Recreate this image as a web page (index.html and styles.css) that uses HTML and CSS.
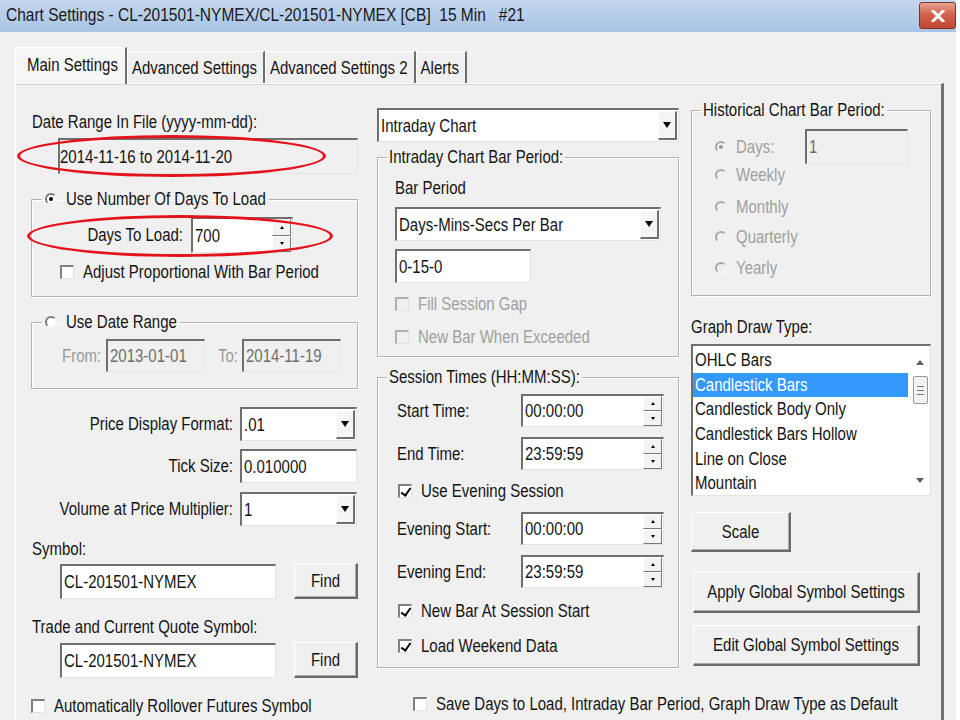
FILE: index.html
```html
<!DOCTYPE html>
<html lang="en">

<head>
    <meta charset="UTF-8">
    <meta name="viewport" content="width=device-width, initial-scale=1.0">
    <title>Chart Settings</title>
    <link rel="stylesheet" href="styles.css">
</head>

<body>
    <div class="window">
        <div class="titleBar">
            <span class="title"><span class="txt">Chart Settings - CL-201501-NYMEX/CL-201501-NYMEX [CB]&nbsp; 15 Min &nbsp; #21</span></span>
            <div class="close">
                <svg width="14" height="12" viewBox="0 0 14 12">
                    <path d="M2 1 L12 11 M12 1 L2 11" stroke="#fff" stroke-width="3" stroke-linecap="square" />
                </svg>
            </div>
        </div>

        <div class="tabs">
            <div class="tab active"><span class="txt">Main Settings</span></div>
            <div class="tab"><span class="txt">Advanced Settings</span></div>
            <div class="tab"><span class="txt">Advanced Settings 2</span></div>
            <div class="tab"><span class="txt">Alerts</span></div>
        </div>

        <div class="panel">
            <!-- left column -->
            <div class="col leftCol">
                <div class="caption rangeCaption"><span class="txt">Date Range In File (yyyy-mm-dd):</span></div>
                <div class="field readonly dateRange"><span class="txt">2014-11-16 to 2014-11-20</span></div>

                <fieldset class="group daysGroup">
                    <legend><span class="radio on"></span><span class="txt">Use Number Of Days To Load</span></legend>
                    <div class="row daysRow">
                        <span class="rowLabel daysLabel"><span class="txt">Days To Load:</span></span>
                        <div class="field spin daysSpin">
                            <span class="txt">700</span>
                            <span class="spinBtns"><i class="up"></i><i class="down"></i></span>
                        </div>
                    </div>
                    <div class="check adjust"><span class="box"></span><span class="txt">Adjust Proportional With Bar Period</span></div>
                </fieldset>

                <fieldset class="group rangeGroup">
                    <legend><span class="radio"></span><span class="txt">Use Date Range</span></legend>
                    <div class="row rangeRow">
                        <span class="muted fromLabel"><span class="txt">From:</span></span>
                        <div class="field disabled rangeField"><span class="txt">2013-01-01</span></div>
                        <span class="muted toLabel"><span class="txt">To:</span></span>
                        <div class="field disabled rangeField"><span class="txt">2014-11-19</span></div>
                    </div>
                </fieldset>

                <div class="row formatRow">
                    <span class="rowLabel priceLabel"><span class="txt">Price Display Format:</span></span>
                    <div class="field combo priceField"><span class="txt">.01</span><span class="drop"></span></div>
                </div>
                <div class="row tickRow">
                    <span class="rowLabel priceLabel"><span class="txt">Tick Size:</span></span>
                    <div class="field priceField"><span class="txt">0.010000</span></div>
                </div>
                <div class="row volumeRow">
                    <span class="rowLabel priceLabel"><span class="txt">Volume at Price Multiplier:</span></span>
                    <div class="field combo priceField"><span class="txt">1</span><span class="drop"></span></div>
                </div>

                <div class="caption symbolCaption"><span class="txt">Symbol:</span></div>
                <div class="row symbolRow">
                    <div class="field symbolField"><span class="txt">CL-201501-NYMEX</span></div>
                    <div class="btn findBtn"><span class="txt">Find</span></div>
                </div>
                <div class="caption quoteCaption"><span class="txt">Trade and Current Quote Symbol:</span></div>
                <div class="row quoteRow">
                    <div class="field symbolField"><span class="txt">CL-201501-NYMEX</span></div>
                    <div class="btn findBtn"><span class="txt">Find</span></div>
                </div>
                <div class="check rollover"><span class="box"></span><span class="txt">Automatically Rollover Futures Symbol</span></div>
            </div>

            <!-- middle column -->
            <div class="col midCol">
                <div class="field combo chartType"><span class="txt">Intraday Chart</span><span class="drop"></span></div>

                <fieldset class="group barGroup">
                    <legend><span class="txt">Intraday Chart Bar Period:</span></legend>
                    <div class="caption barCaption"><span class="txt">Bar Period</span></div>
                    <div class="field combo barCombo"><span class="txt">Days-Mins-Secs Per Bar</span><span class="drop"></span></div>
                    <div class="field barValue"><span class="txt">0-15-0</span></div>
                    <div class="check off fillGap"><span class="box"></span><span class="txt">Fill Session Gap</span></div>
                    <div class="check off exceeded"><span class="box"></span><span class="txt">New Bar When Exceeded</span></div>
                </fieldset>

                <fieldset class="group sessionGroup">
                    <legend><span class="txt">Session Times (HH:MM:SS):</span></legend>
                    <div class="row timeRow firstTime">
                        <span class="timeLabel"><span class="txt">Start Time:</span></span>
                        <div class="field spin timeSpin"><span class="txt">00:00:00</span><span class="spinBtns"><i class="up"></i><i class="down"></i></span></div>
                    </div>
                    <div class="row timeRow">
                        <span class="timeLabel"><span class="txt">End Time:</span></span>
                        <div class="field spin timeSpin"><span class="txt">23:59:59</span><span class="spinBtns"><i class="up"></i><i class="down"></i></span></div>
                    </div>
                    <div class="check evening"><span class="box ticked"></span><span class="txt">Use Evening Session</span></div>
                    <div class="row timeRow">
                        <span class="timeLabel"><span class="txt">Evening Start:</span></span>
                        <div class="field spin timeSpin"><span class="txt">00:00:00</span><span class="spinBtns"><i class="up"></i><i class="down"></i></span></div>
                    </div>
                    <div class="row timeRow">
                        <span class="timeLabel"><span class="txt">Evening End:</span></span>
                        <div class="field spin timeSpin"><span class="txt">23:59:59</span><span class="spinBtns"><i class="up"></i><i class="down"></i></span></div>
                    </div>
                    <div class="check newBar"><span class="box ticked"></span><span class="txt">New Bar At Session Start</span></div>
                    <div class="check weekend"><span class="box ticked"></span><span class="txt">Load Weekend Data</span></div>
                </fieldset>

                <div class="check saveDefault"><span class="box"></span><span class="txt">Save Days to Load, Intraday Bar Period, Graph Draw Type as Default</span></div>
            </div>

            <!-- right column -->
            <div class="col rightCol">
                <fieldset class="group histGroup">
                    <legend><span class="txt">Historical Chart Bar Period:</span></legend>
                    <div class="row histDays">
                        <div class="option"><span class="radio on off"></span><span class="txt">Days:</span></div>
                        <div class="field disabled histField"><span class="txt">1</span></div>
                    </div>
                    <div class="option weekly"><span class="radio off"></span><span class="txt">Weekly</span></div>
                    <div class="option monthly"><span class="radio off"></span><span class="txt">Monthly</span></div>
                    <div class="option quarterly"><span class="radio off"></span><span class="txt">Quarterly</span></div>
                    <div class="option yearly"><span class="radio off"></span><span class="txt">Yearly</span></div>
                </fieldset>

                <div class="caption drawCaption"><span class="txt">Graph Draw Type:</span></div>
                <div class="listBox">
                    <div class="items">
                        <div class="item"><span class="txt">OHLC Bars</span></div>
                        <div class="item selected"><span class="txt">Candlestick Bars</span></div>
                        <div class="item"><span class="txt">Candlestick Body Only</span></div>
                        <div class="item"><span class="txt">Candlestick Bars Hollow</span></div>
                        <div class="item"><span class="txt">Line on Close</span></div>
                        <div class="item"><span class="txt">Mountain</span></div>
                    </div>
                    <div class="scrollBar">
                        <span class="arrowUp"></span>
                        <span class="thumb"><i></i><i></i><i></i></span>
                        <span class="arrowDown"></span>
                    </div>
                </div>

                <div class="btn scaleBtn"><span class="txt">Scale</span></div>
                <div class="btn wideBtn applyBtn"><span class="txt">Apply Global Symbol Settings</span></div>
                <div class="btn wideBtn editBtn"><span class="txt">Edit Global Symbol Settings</span></div>
            </div>
        </div>

        <div class="mark markRange"></div>
        <div class="mark markDays"></div>
    </div>
</body>

</html>
```

FILE: styles.css
```css
* {
    margin: 0px;
    padding: 0px;
    box-sizing: border-box;
}

body {
    background-color: #ffffff;
    font-family: "Liberation Sans", Arial, sans-serif;
    font-size: 15px;
    color: #141414;
}

/* the old dialog font is tall and narrow: stretch the glyphs upward */
.txt {
    display: inline-block;
    line-height: 18px;
    white-space: nowrap;
    transform: scaleY(1.22);
}

.window {
    position: relative;
    width: 956px;
    height: 720px;
    overflow: hidden;
    background-color: #f0f0f0;
}

/* title bar */

.titleBar {
    display: flex;
    justify-content: space-between;
    align-items: flex-start;
    height: 32px;
    background: linear-gradient(#c3d7ee, #a8c4e5);
}

.title {
    padding-left: 6px;
    line-height: 30px;
    font-size: 15.5px;
    color: #1a1a1a;
}

.close {
    display: flex;
    align-items: center;
    justify-content: center;
    width: 37px;
    height: 27px;
    margin-top: 2px;
    border: 1px solid #7a3328;
    border-radius: 3px;
    background: linear-gradient(#e9a393, #d0644f 45%, #c24631);
}

/* tabs */

.tabs {
    position: relative;
    z-index: 1;
    display: flex;
    align-items: flex-end;
    height: 36px;
    margin: 15px 0 0 15px;
}

.tab {
    display: flex;
    align-items: center;
    height: 32px;
    padding: 0 6px 0 4px;
    border-top: 1px solid #ffffff;
    border-left: 1px solid #ffffff;
    border-right: 2px solid #6e6e6e;
    background-color: #f0f0f0;
}

.tab.active {
    height: 37px;
    margin-bottom: -1px;
    padding: 0 7px 2px 11px;
    background-color: #f6f6f6;
}

.panel {
    display: flex;
    width: 929px;
    height: 640px;
    margin-left: 15px;
    padding-left: 15px;
    border-top: 1px solid #fdfdfd;
    border-left: 1px solid #fdfdfd;
    border-right: 3px solid #707070;
    box-shadow: inset 0 1px 0 #d6d6d6;
}

.col {
    display: flex;
    flex-direction: column;
    align-items: flex-start;
}

.leftCol {
    width: 327px;
}

.midCol {
    width: 302px;
    margin-left: 19px;
}

.rightCol {
    width: 240px;
    margin-left: 12px;
}

.caption {
    display: flex;
    align-items: center;
    height: 20px;
}

.row {
    display: flex;
    align-items: center;
}

.muted {
    color: #9a9a9a;
}

/* group boxes */

.group {
    width: 100%;
    border: 1px solid #b4b4b4;
    box-shadow: inset 1px 1px 0 #ffffff, 1px 1px 0 #ffffff;
    padding: 0;
}

.group legend {
    display: flex;
    align-items: center;
    gap: 9px;
    height: 20px;
    margin-left: 10px;
    padding: 0 3px;
}

/* edit fields */

.field {
    display: flex;
    align-items: center;
    height: 34px;
    padding-left: 2px;
    background-color: #ffffff;
    border-top: 2px solid #6f6f6f;
    border-left: 2px solid #6f6f6f;
    border-right: 1px solid #e4e4e4;
    border-bottom: 1px solid #e4e4e4;
}

.field.readonly,
.field.disabled {
    background-color: #f0f0f0;
}

.field.disabled {
    color: #6e6e6e;
}

.combo,
.spin {
    justify-content: space-between;
    padding-right: 1px;
}

.drop {
    display: flex;
    align-items: center;
    justify-content: center;
    align-self: stretch;
    width: 19px;
    margin: 1px 0;
    background-color: #f5f5f5;
    border-top: 1px solid #ffffff;
    border-left: 1px solid #ffffff;
    border-right: 2px solid #6e6e6e;
    border-bottom: 2px solid #6e6e6e;
}

.drop::after {
    content: "";
    border-left: 4px solid transparent;
    border-right: 4px solid transparent;
    border-top: 6px solid #000000;
}

.spinBtns {
    display: flex;
    flex-direction: column;
    align-self: stretch;
    width: 19px;
}

.spinBtns i {
    flex: 1;
    display: flex;
    align-items: center;
    justify-content: center;
    background-color: #f3f3f3;
    border-top: 1px solid #ffffff;
    border-left: 1px solid #ffffff;
    border-right: 1px solid #777777;
    border-bottom: 1px solid #777777;
}

.spinBtns .up::after {
    content: "";
    border-left: 2px solid transparent;
    border-right: 2px solid transparent;
    border-bottom: 3px solid #000000;
}

.spinBtns .down::after {
    content: "";
    border-left: 2px solid transparent;
    border-right: 2px solid transparent;
    border-top: 3px solid #000000;
}

/* check boxes and radios */

.check,
.option {
    display: flex;
    align-items: center;
    gap: 9px;
    height: 20px;
}

.box {
    position: relative;
    width: 14px;
    height: 14px;
    background-color: #ffffff;
    border-top: 2px solid #808080;
    border-left: 2px solid #808080;
    border-right: 1px solid #e2e2e2;
    border-bottom: 1px solid #e2e2e2;
}

.box.ticked::after {
    content: "";
    position: absolute;
    left: 3px;
    top: 0px;
    width: 4px;
    height: 8px;
    border-right: 2px solid #000000;
    border-bottom: 2px solid #000000;
    transform: rotate(35deg);
}

.check.off {
    color: #a0a0a0;
}

.check.off .box {
    background-color: #f0f0f0;
    border-top-color: #b0b0b0;
    border-left-color: #b0b0b0;
}

.radio {
    position: relative;
    width: 12px;
    height: 12px;
    border-radius: 50%;
    background-color: #ffffff;
    border: 2px solid;
    border-color: #7a7a7a #f4f4f4 #f4f4f4 #7a7a7a;
}

.radio.on::after {
    content: "";
    position: absolute;
    left: 2px;
    top: 2px;
    width: 4px;
    height: 4px;
    border-radius: 50%;
    background-color: #000000;
}

.radio.off {
    background-color: #f0f0f0;
    border-color: #a8a8a8 #f4f4f4 #f4f4f4 #a8a8a8;
}

.radio.off::after {
    background-color: #9a9a9a;
}

/* buttons */

.btn {
    display: flex;
    align-items: center;
    justify-content: center;
    background-color: #f0f0f0;
    border-top: 1px solid #ffffff;
    border-left: 1px solid #ffffff;
    border-right: 2px solid #6a6a6a;
    border-bottom: 2px solid #6a6a6a;
    box-shadow: inset -1px -1px 0 #a8a8a8;
}

/* left column */

.rangeCaption {
    margin-top: 28px;
    margin-left: 1px;
}

.dateRange {
    width: 300px;
    height: 36px;
    margin-top: 6px;
    margin-left: 27px;
    padding-left: 0;
}

.daysGroup {
    margin-top: 15px;
    padding-bottom: 14px;
}

.daysRow {
    margin-top: 8px;
}

.daysLabel {
    width: 151px;
    margin-right: 8px;
    text-align: right;
}

.daysSpin {
    width: 102px;
    height: 36px;
}

.adjust {
    margin-top: 9px;
    margin-left: 28px;
}

.rangeGroup {
    margin-top: 15px;
    padding-bottom: 16px;
}

.rangeRow {
    margin-top: 7px;
}

.fromLabel {
    width: 44px;
    margin-left: 30px;
}

.toLabel {
    width: 24px;
    margin-left: 13px;
}

.rangeField {
    width: 99px;
    height: 33px;
}

.rowLabel {
    text-align: right;
}

.priceLabel {
    width: 202px;
    margin-right: 7px;
}

.priceField {
    width: 117px;
}

.formatRow {
    margin-top: 18px;
}

.tickRow {
    margin-top: 8px;
}

.volumeRow {
    margin-top: 9px;
}

.symbolCaption {
    margin-top: 13px;
    margin-left: 1px;
}

.symbolRow {
    margin-top: 4px;
    margin-left: 29px;
}

.symbolField {
    width: 216px;
    height: 35px;
}

.findBtn {
    width: 64px;
    height: 36px;
    margin-left: 18px;
}

.quoteCaption {
    margin-top: 18px;
    margin-left: 1px;
}

.quoteRow {
    margin-top: 5px;
    margin-left: 29px;
}

.rollover {
    margin-top: 18px;
}

/* middle column */

.chartType {
    width: 302px;
    margin-top: 24px;
}

.barGroup {
    margin-top: 5px;
    padding: 0 0 9px 17px;
}

/* legends sit after the group's left padding, pull them back to the frame corner */
.barGroup legend {
    margin-left: -8px;
    padding: 0 2px;
}

.sessionGroup legend {
    margin-left: -10px;
    padding: 0 2px;
}

.histGroup legend {
    margin-left: -14px;
    padding: 0 2px;
}

.barCaption {
    margin-top: 11px;
}

.barCombo {
    width: 266px;
    margin-top: 9px;
}

.barValue {
    width: 136px;
    margin-top: 8px;
}

.fillGap {
    margin-top: 11px;
}

.exceeded {
    margin-top: 13px;
}

.sessionGroup {
    margin-top: 10px;
    padding: 0 0 11px 19px;
}

.timeRow {
    margin-top: 10px;
}

.timeRow.firstTime {
    margin-top: 7px;
}

.timeLabel {
    width: 124px;
}

.timeSpin {
    width: 143px;
    height: 33px;
}

.evening {
    margin-top: 11px;
    margin-left: 1px;
}

.evening + .timeRow {
    margin-top: 11px;
}

.newBar {
    margin-top: 13px;
    margin-left: 1px;
}

.weekend {
    margin-top: 15px;
    margin-left: 1px;
}

.saveDefault {
    margin-top: 26px;
    margin-left: 36px;
}

/* right column */

.histGroup {
    margin-top: 16px;
    padding: 0 0 17px 23px;
    color: #a0a0a0;
}

.histGroup legend {
    color: #141414;
}

.histDays {
    margin-top: 9px;
}

.histDays .option {
    width: 90px;
}

.histField {
    width: 103px;
    height: 35px;
}

.weekly {
    margin-top: 1px;
}

.monthly {
    margin-top: 12px;
}

.quarterly {
    margin-top: 10px;
}

.yearly {
    margin-top: 11px;
}

.drawCaption {
    margin-top: 21px;
}

.listBox {
    display: flex;
    width: 240px;
    height: 152px;
    margin-top: 7px;
    padding-top: 2px;
    background-color: #ffffff;
    border-top: 2px solid #6f6f6f;
    border-left: 2px solid #6f6f6f;
    border-right: 1px solid #e4e4e4;
    border-bottom: 1px solid #e4e4e4;
}

.items {
    width: 215px;
}

.item {
    display: flex;
    align-items: center;
    height: 24.6px;
    padding-left: 2px;
}

.item.selected {
    background-color: #3399ff;
    color: #ffffff;
}

.scrollBar {
    display: flex;
    flex-direction: column;
    align-items: center;
    width: 20px;
    margin-left: 2px;
}

.arrowUp {
    margin-top: 12px;
    border-left: 4px solid transparent;
    border-right: 4px solid transparent;
    border-bottom: 5px solid #606060;
}

.arrowDown {
    margin-top: 74px;
    border-left: 4px solid transparent;
    border-right: 4px solid transparent;
    border-top: 5px solid #606060;
}

.thumb {
    display: flex;
    flex-direction: column;
    justify-content: center;
    gap: 3px;
    width: 15px;
    height: 28px;
    margin-top: 11px;
    padding: 0 3px;
    background-color: #f2f2f2;
    border: 1px solid #9a9a9a;
    border-radius: 2px;
}

.thumb i {
    height: 1px;
    background-color: #777777;
}

.scaleBtn {
    width: 100px;
    height: 40px;
    margin-top: 16px;
}

.wideBtn {
    width: 227px;
    height: 41px;
    margin-left: 2px;
}

.applyBtn {
    margin-top: 20px;
}

.editBtn {
    margin-top: 12px;
}

/* red highlight rings drawn over the screenshot */

.mark {
    position: absolute;
    border: 3px solid #e3121b;
    border-radius: 50%;
    pointer-events: none;
}

.markRange {
    left: 17px;
    top: 135px;
    width: 309px;
    height: 42px;
}

.markDays {
    left: 27px;
    top: 215px;
    width: 306px;
    height: 42px;
}
```
